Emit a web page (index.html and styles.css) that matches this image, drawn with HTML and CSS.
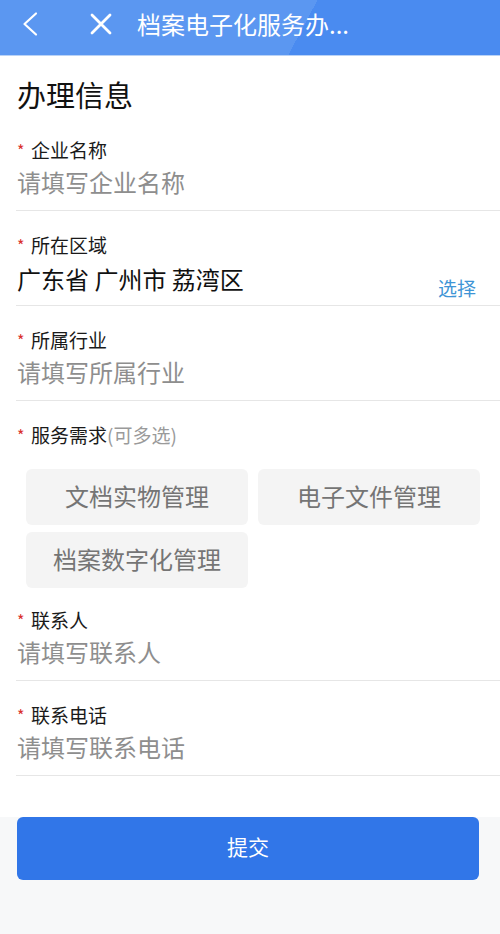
FILE: index.html
```html
<!DOCTYPE html>
<html lang="zh-CN">
<head>
<meta charset="utf-8">
<title>档案电子化服务办理</title>
<link rel="stylesheet" href="styles.css">
</head>
<body>
<header class="topbar">
  <svg class="icon-back" width="20" height="26" viewBox="0 0 20 26"><path d="M16 2.5 L4.5 13 L16 23.5" fill="none" stroke="#fff" stroke-width="2.2" stroke-linecap="round" stroke-linejoin="round"/></svg>
  <svg class="icon-close" width="24" height="24" viewBox="0 0 24 24"><path d="M3 3 L21 21 M21 3 L3 21" fill="none" stroke="#fff" stroke-width="2.8" stroke-linecap="round"/></svg>
  <div class="topbar-title">档案电子化服务办...</div>
</header>

<main class="form">
  <h1 class="section-title">办理信息</h1>

  <div class="field">
    <div class="label"><span class="req">*</span>企业名称</div>
    <div class="input placeholder">请填写企业名称</div>
  </div>

  <div class="field">
    <div class="label"><span class="req">*</span>所在区域</div>
    <div class="row">
      <div class="input value">广东省 广州市 荔湾区</div>
      <div class="pick">选择</div>
    </div>
  </div>

  <div class="field">
    <div class="label"><span class="req">*</span>所属行业</div>
    <div class="input placeholder">请填写所属行业</div>
  </div>

  <div class="field field-tags">
    <div class="label"><span class="req">*</span>服务需求<span class="hint">(可多选)</span></div>
    <div class="tags">
      <div class="tag">文档实物管理</div>
      <div class="tag">电子文件管理</div>
      <div class="tag">档案数字化管理</div>
    </div>
  </div>

  <div class="field field-after-tags">
    <div class="label"><span class="req">*</span>联系人</div>
    <div class="input placeholder">请填写联系人</div>
  </div>

  <div class="field">
    <div class="label"><span class="req">*</span>联系电话</div>
    <div class="input placeholder">请填写联系电话</div>
  </div>
</main>

<div class="footer">
  <button class="submit" type="button">提交</button>
</div>
</body>
</html>
```

FILE: styles.css
```css
* { box-sizing: border-box; }
html, body {
  margin: 0;
  padding: 0;
}
body {
  background: #f7f8f9;
  font-family: "Noto Sans CJK SC", "Noto Sans", sans-serif;
  color: #1a1a1a;
  width: 500px;
  min-height: 934px;
}

.topbar {
  height: 56px;
  display: flex;
  align-items: center;
  background: linear-gradient(118deg, #5b97f1 0%, #5b97f1 60%, #4a8bf0 60%, #4a8bf0 100%);
  border-bottom: 1px solid #b9d2f6;
  padding-bottom: 8px;
}
.icon-back {
  margin-left: 20px;
  flex: none;
}
.icon-close {
  margin-left: 49px;
  flex: none;
}
.topbar-title {
  margin-left: 24px;
  color: #fff;
  font-size: 24px;
  line-height: 30px;
  white-space: nowrap;
}

.form {
  background: #fff;
  padding: 0 0 41px 16px;
}
.section-title {
  margin: 0;
  padding-top: 18px;
  padding-bottom: 2px;
  padding-left: 1px;
  font-size: 29px;
  line-height: 40px;
  font-weight: 400;
  color: #111;
}

.field {
  padding: 22px 0 9px 0;
  border-bottom: 1px solid #e6e6e6;
}
.field-tags {
  border-bottom: none;
  padding-bottom: 0;
  padding-right: 20px;
}
.field-after-tags {
  padding-top: 20px;
}

.label {
  font-size: 19px;
  line-height: 24px;
  color: #1a1a1a;
  display: flex;
  align-items: center;
}
.req {
  color: #d9302c;
  font-size: 16px;
  width: 15px;
  padding-left: 1px;
  line-height: 20px;
}
.hint {
  color: #9a9a9a;
}

.input {
  margin-top: 2px;
  margin-bottom: 1px;
  font-size: 24px;
  line-height: 36px;
  padding-left: 1px;
}
.placeholder {
  color: #8e8e8e;
}
.value {
  color: #111;
}

.row {
  display: flex;
  align-items: flex-end;
  justify-content: space-between;
  padding-right: 24px;
}
.row .input {
  margin-top: 5px;
  margin-bottom: 1px;
  line-height: 33px;
}
.pick {
  color: #3e95d6;
  font-size: 19px;
  line-height: 22px;
  margin-bottom: -3px;
}

.tags {
  margin: 22px 0 0 10px;
  display: grid;
  grid-template-columns: 222px 222px;
  column-gap: 10px;
  row-gap: 7px;
}
.tag {
  height: 56px;
  padding-bottom: 4px;
  background: #f4f4f4;
  border-radius: 6px;
  display: flex;
  align-items: center;
  justify-content: center;
  font-size: 24px;
  color: #757575;
}

.footer {
  padding: 0 21px 0 17px;
}
.submit {
  display: block;
  width: 100%;
  height: 63px;
  border: none;
  border-radius: 6px;
  background: #3176e8;
  color: #fff;
  font-family: "Noto Sans CJK SC", "Noto Sans", sans-serif;
  font-size: 21px;
  padding: 0 0 5px 0;
}
```
